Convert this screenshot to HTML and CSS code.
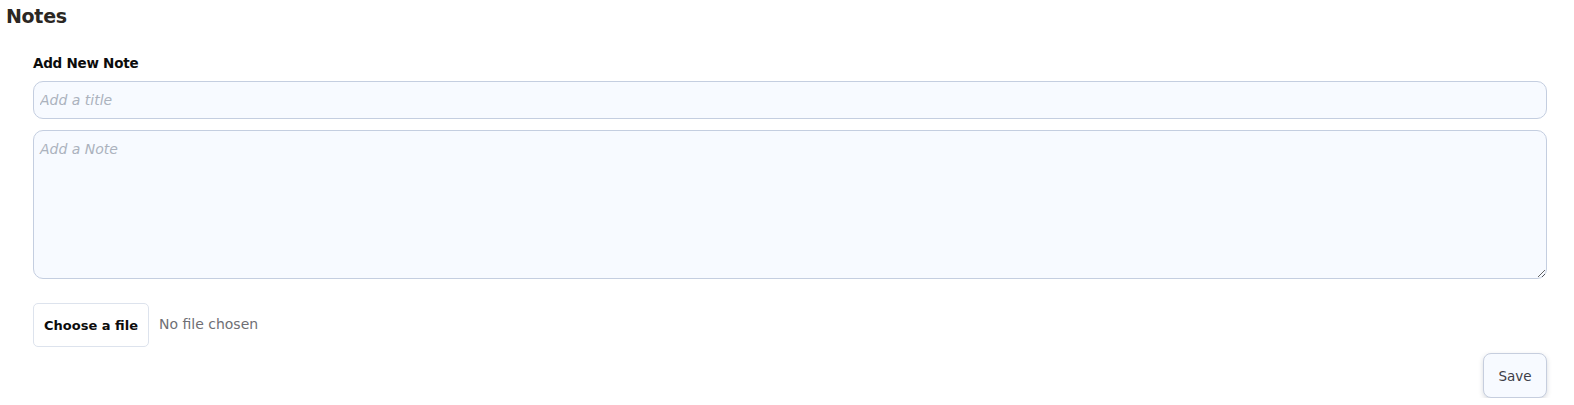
FILE: index.html
```html
<!DOCTYPE html>
<html lang="en">
<head>
<meta charset="utf-8">
<title>Notes</title>
<link rel="stylesheet" href="styles.css">
</head>
<body>
<div class="notes">
  <h2 class="notes-title">Notes</h2>
  <form class="note-form">
    <label class="form-label" for="note-title">Add New Note</label>
    <input id="note-title" class="field field-title" type="text" placeholder="Add a title">
    <textarea class="field field-body" placeholder="Add a Note"></textarea>
    <div class="file-row">
      <button type="button" class="file-btn">Choose a file</button>
      <span class="file-status">No file chosen</span>
    </div>
    <div class="actions">
      <button type="button" class="save-btn">Save</button>
    </div>
  </form>
</div>
</body>
</html>
```

FILE: styles.css
```css
* { box-sizing: border-box; }
html, body { margin: 0; padding: 0; background: #ffffff; }
body { font-family: "DejaVu Sans", sans-serif; color: #111; }

.notes { display: flex; flex-direction: column; }

.notes-title {
  margin: 5px 0 0 6px;
  font-size: 19px;
  font-weight: 700;
  line-height: 22px;
  letter-spacing: -0.3px;
  color: #2b2723;
}

.note-form {
  display: flex;
  flex-direction: column;
  padding: 28px 27px 0 33px;
}

.form-label {
  font-size: 13.5px;
  font-weight: 700;
  line-height: 16px;
  letter-spacing: -0.25px;
  color: #0c0c0c;
  margin-bottom: 10px;
}

.field {
  width: 100%;
  border: 1px solid #c4cee0;
  background: #f7faff;
  border-radius: 10px;
  font-family: "DejaVu Sans", sans-serif;
  font-size: 14px;
  color: #222;
  outline: none;
}
.field::placeholder { color: #abb2bd; font-style: italic; }

.field-title {
  height: 38px;
  padding: 0 6px;
}

.field-body {
  height: 149px;
  margin-top: 11px;
  padding: 10px 6px;
  resize: vertical;
  line-height: 16px;
  display: block;
}

.file-row {
  display: flex;
  align-items: center;
  gap: 10px;
  margin-top: 24px;
}

.file-btn {
  height: 44px;
  padding: 0 10px;
  border: 1px solid #dde3ed;
  border-radius: 5px;
  background: #ffffff;
  font-family: "DejaVu Sans", sans-serif;
  font-size: 13px;
  font-weight: 700;
  color: #0c0c0c;
}

.file-status {
  font-size: 14px;
  line-height: 16px;
  padding-bottom: 3px;
  color: #6f6f74;
}

.actions {
  display: flex;
  justify-content: flex-end;
  margin-top: 6px;
}

.save-btn {
  width: 64px;
  height: 45px;
  border: 1px solid #c6cede;
  border-radius: 8px;
  background: #f7faff;
  font-family: "DejaVu Sans", sans-serif;
  font-size: 13.5px;
  color: #3e3e48;
  box-shadow: 0 2px 5px rgba(40, 50, 70, 0.18);
}
```
